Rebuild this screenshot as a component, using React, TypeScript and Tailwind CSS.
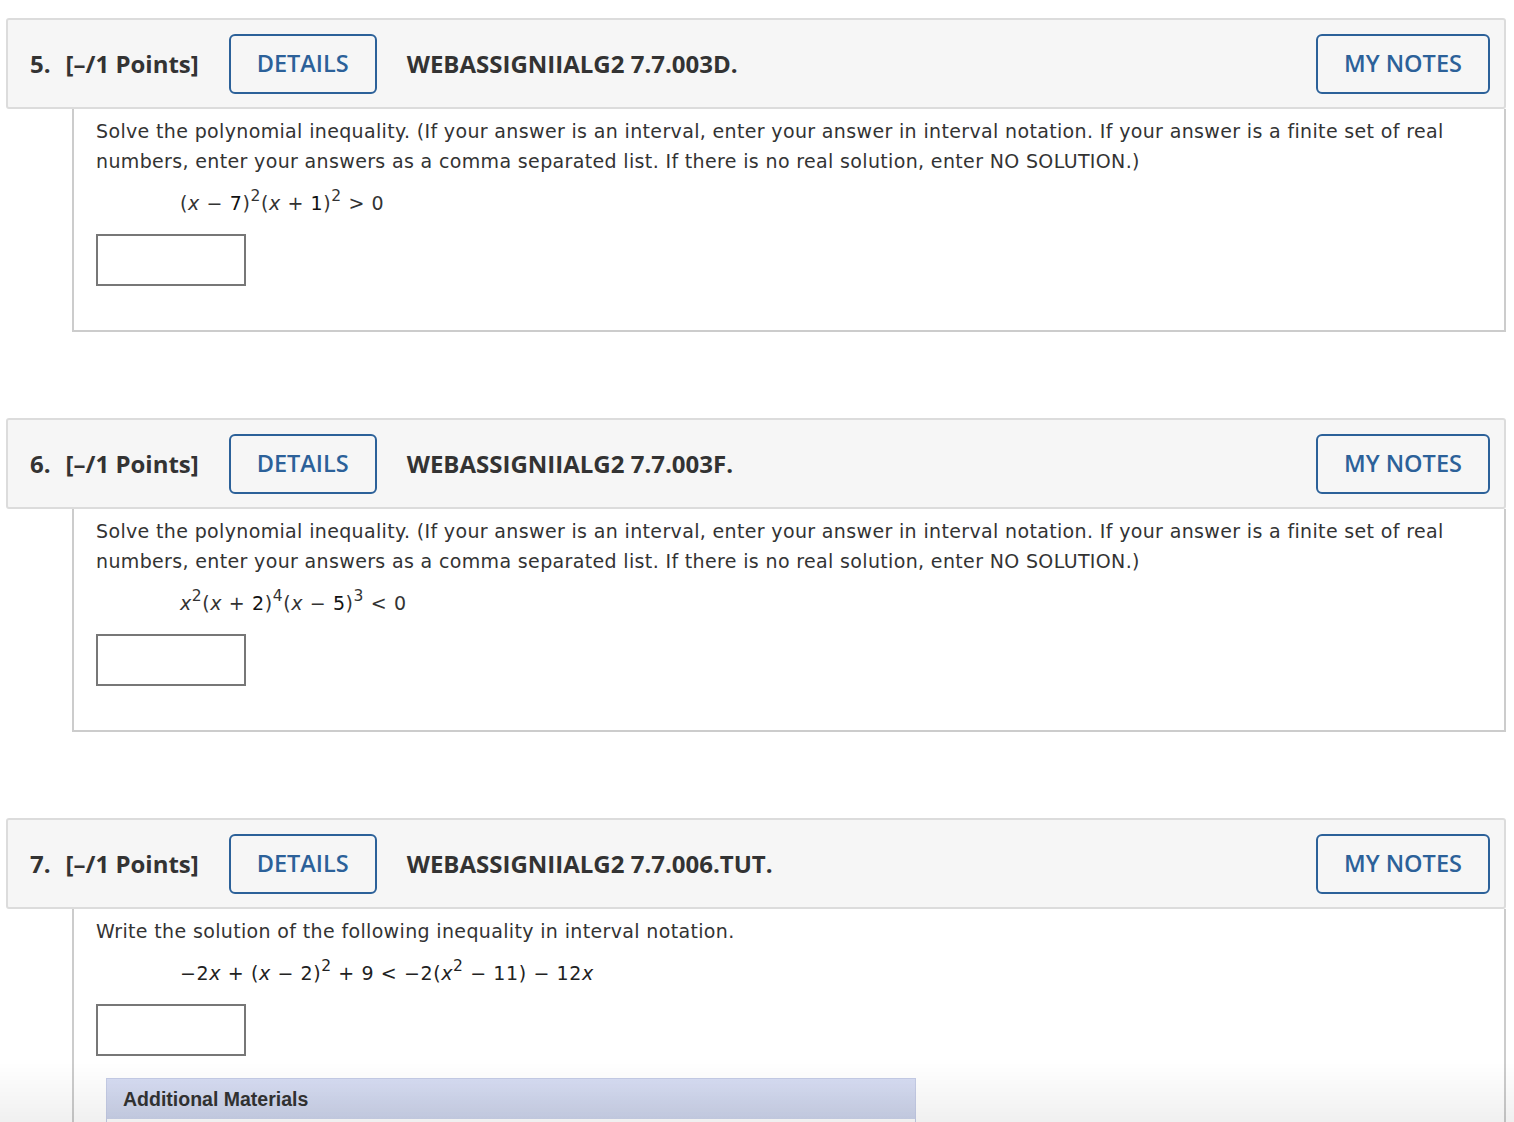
import React from "react";

const bodyFont = { fontFamily: '"DejaVu Sans", Verdana, sans-serif' };

function X() {
  return <i>x</i>;
}

function Sup({ children }: { children: React.ReactNode }) {
  return <sup className="text-[15.5px] relative top-[-2px] align-super leading-none">{children}</sup>;
}

function Header({ num, code }: { num: string; code: string }) {
  return (
    <div className="flex items-center h-[91px] bg-[#f6f6f6] border-2 border-[#dcdcdc] rounded-[3px] pl-[22px] pr-[14px] font-['Open_Sans',sans-serif] text-[#333]">
      <span className="text-[24px] font-bold">{num}.</span>
      <span className="text-[24px] font-bold ml-[15px]">[–/1 Points]</span>
      <button className="ml-[30px] w-[148px] h-[60px] border-2 border-[#2c6199] rounded-[6px] text-[#2c6199] text-[23.5px] font-semibold">
        DETAILS
      </button>
      <span className="ml-[30px] text-[24px] font-bold">{code}</span>
      <div className="flex-1" />
      <button className="w-[174px] h-[60px] border-2 border-[#2c6199] rounded-[6px] text-[#2c6199] text-[23.5px] font-semibold">
        MY NOTES
      </button>
    </div>
  );
}

function Body({ children, pb = "pb-[44px]" }: { children: React.ReactNode; pb?: string }) {
  return (
    <div
      className={`ml-[66px] border-2 border-t-0 border-[#cccccc] pl-[22px] pt-[7px] ${pb} text-[19px] leading-[30px] tracking-[0.35px] text-[#333]`}
      style={bodyFont}
    >
      {children}
    </div>
  );
}

function InputBox() {
  return <div className="mt-[16px] w-[150px] h-[52px] border-2 border-[#777] bg-white" />;
}

const PROMPT =
  "Solve the polynomial inequality. (If your answer is an interval, enter your answer in interval notation. If your answer is a finite set of real numbers, enter your answers as a comma separated list. If there is no real solution, enter NO SOLUTION.)";

export default function App() {
  return (
    <div className="relative bg-white min-h-[1122px] pt-[18px] pl-[6px] pr-[8px]">
      {/* Question 5 */}
      <div>
        <Header num="5" code="WEBASSIGNIIALG2 7.7.003D." />
        <Body>
          <p className="pr-[30px]">{PROMPT}</p>
          <p className="mt-[12px] ml-[84px] tracking-[0.6px]">
            (<X /> − <span className="text-[#111]">7</span>)<Sup>2</Sup>(<X /> + <span className="text-[#111]">1</span>)<Sup>2</Sup> &gt; 0
          </p>
          <InputBox />
        </Body>
      </div>

      {/* Question 6 */}
      <div className="mt-[86px]">
        <Header num="6" code="WEBASSIGNIIALG2 7.7.003F." />
        <Body>
          <p className="pr-[30px]">{PROMPT}</p>
          <p className="mt-[12px] ml-[84px] tracking-[0.6px]">
            <X />
            <Sup>2</Sup>(<X /> + <span className="text-[#111]">2</span>)<Sup>4</Sup>(<X /> − <span className="text-[#111]">5</span>)<Sup>3</Sup> &lt; 0
          </p>
          <InputBox />
        </Body>
      </div>

      {/* Question 7 */}
      <div className="mt-[86px]">
        <Header num="7" code="WEBASSIGNIIALG2 7.7.006.TUT." />
        <Body pb="pb-[40px]">
          <p>Write the solution of the following inequality in interval notation.</p>
          <p className="mt-[12px] ml-[84px] tracking-[0.6px] text-[#222]">
            −2<X /> + (<X /> − 2)<Sup>2</Sup> + 9 &lt; −2(<X />
            <Sup>2</Sup> − 11) − 12<X />
          </p>
          <InputBox />
          <div className="mt-[22px] ml-[10px] w-[810px] border border-[#c5cce6]">
            <div className="h-[40px] flex items-center pl-[16px] bg-gradient-to-b from-[#d7ddf3] to-[#ccd3ea] font-['Liberation_Sans',Arial,sans-serif] font-bold text-[19.5px] tracking-normal text-[#333]">
              Additional Materials
            </div>
            <div className="h-[120px] bg-white" />
          </div>
        </Body>
      </div>

      <div className="fixed left-0 right-0 bottom-0 h-[60px] pointer-events-none bg-gradient-to-b from-[rgba(0,0,0,0)] to-[rgba(0,0,0,0.06)]" />
    </div>
  );
}
